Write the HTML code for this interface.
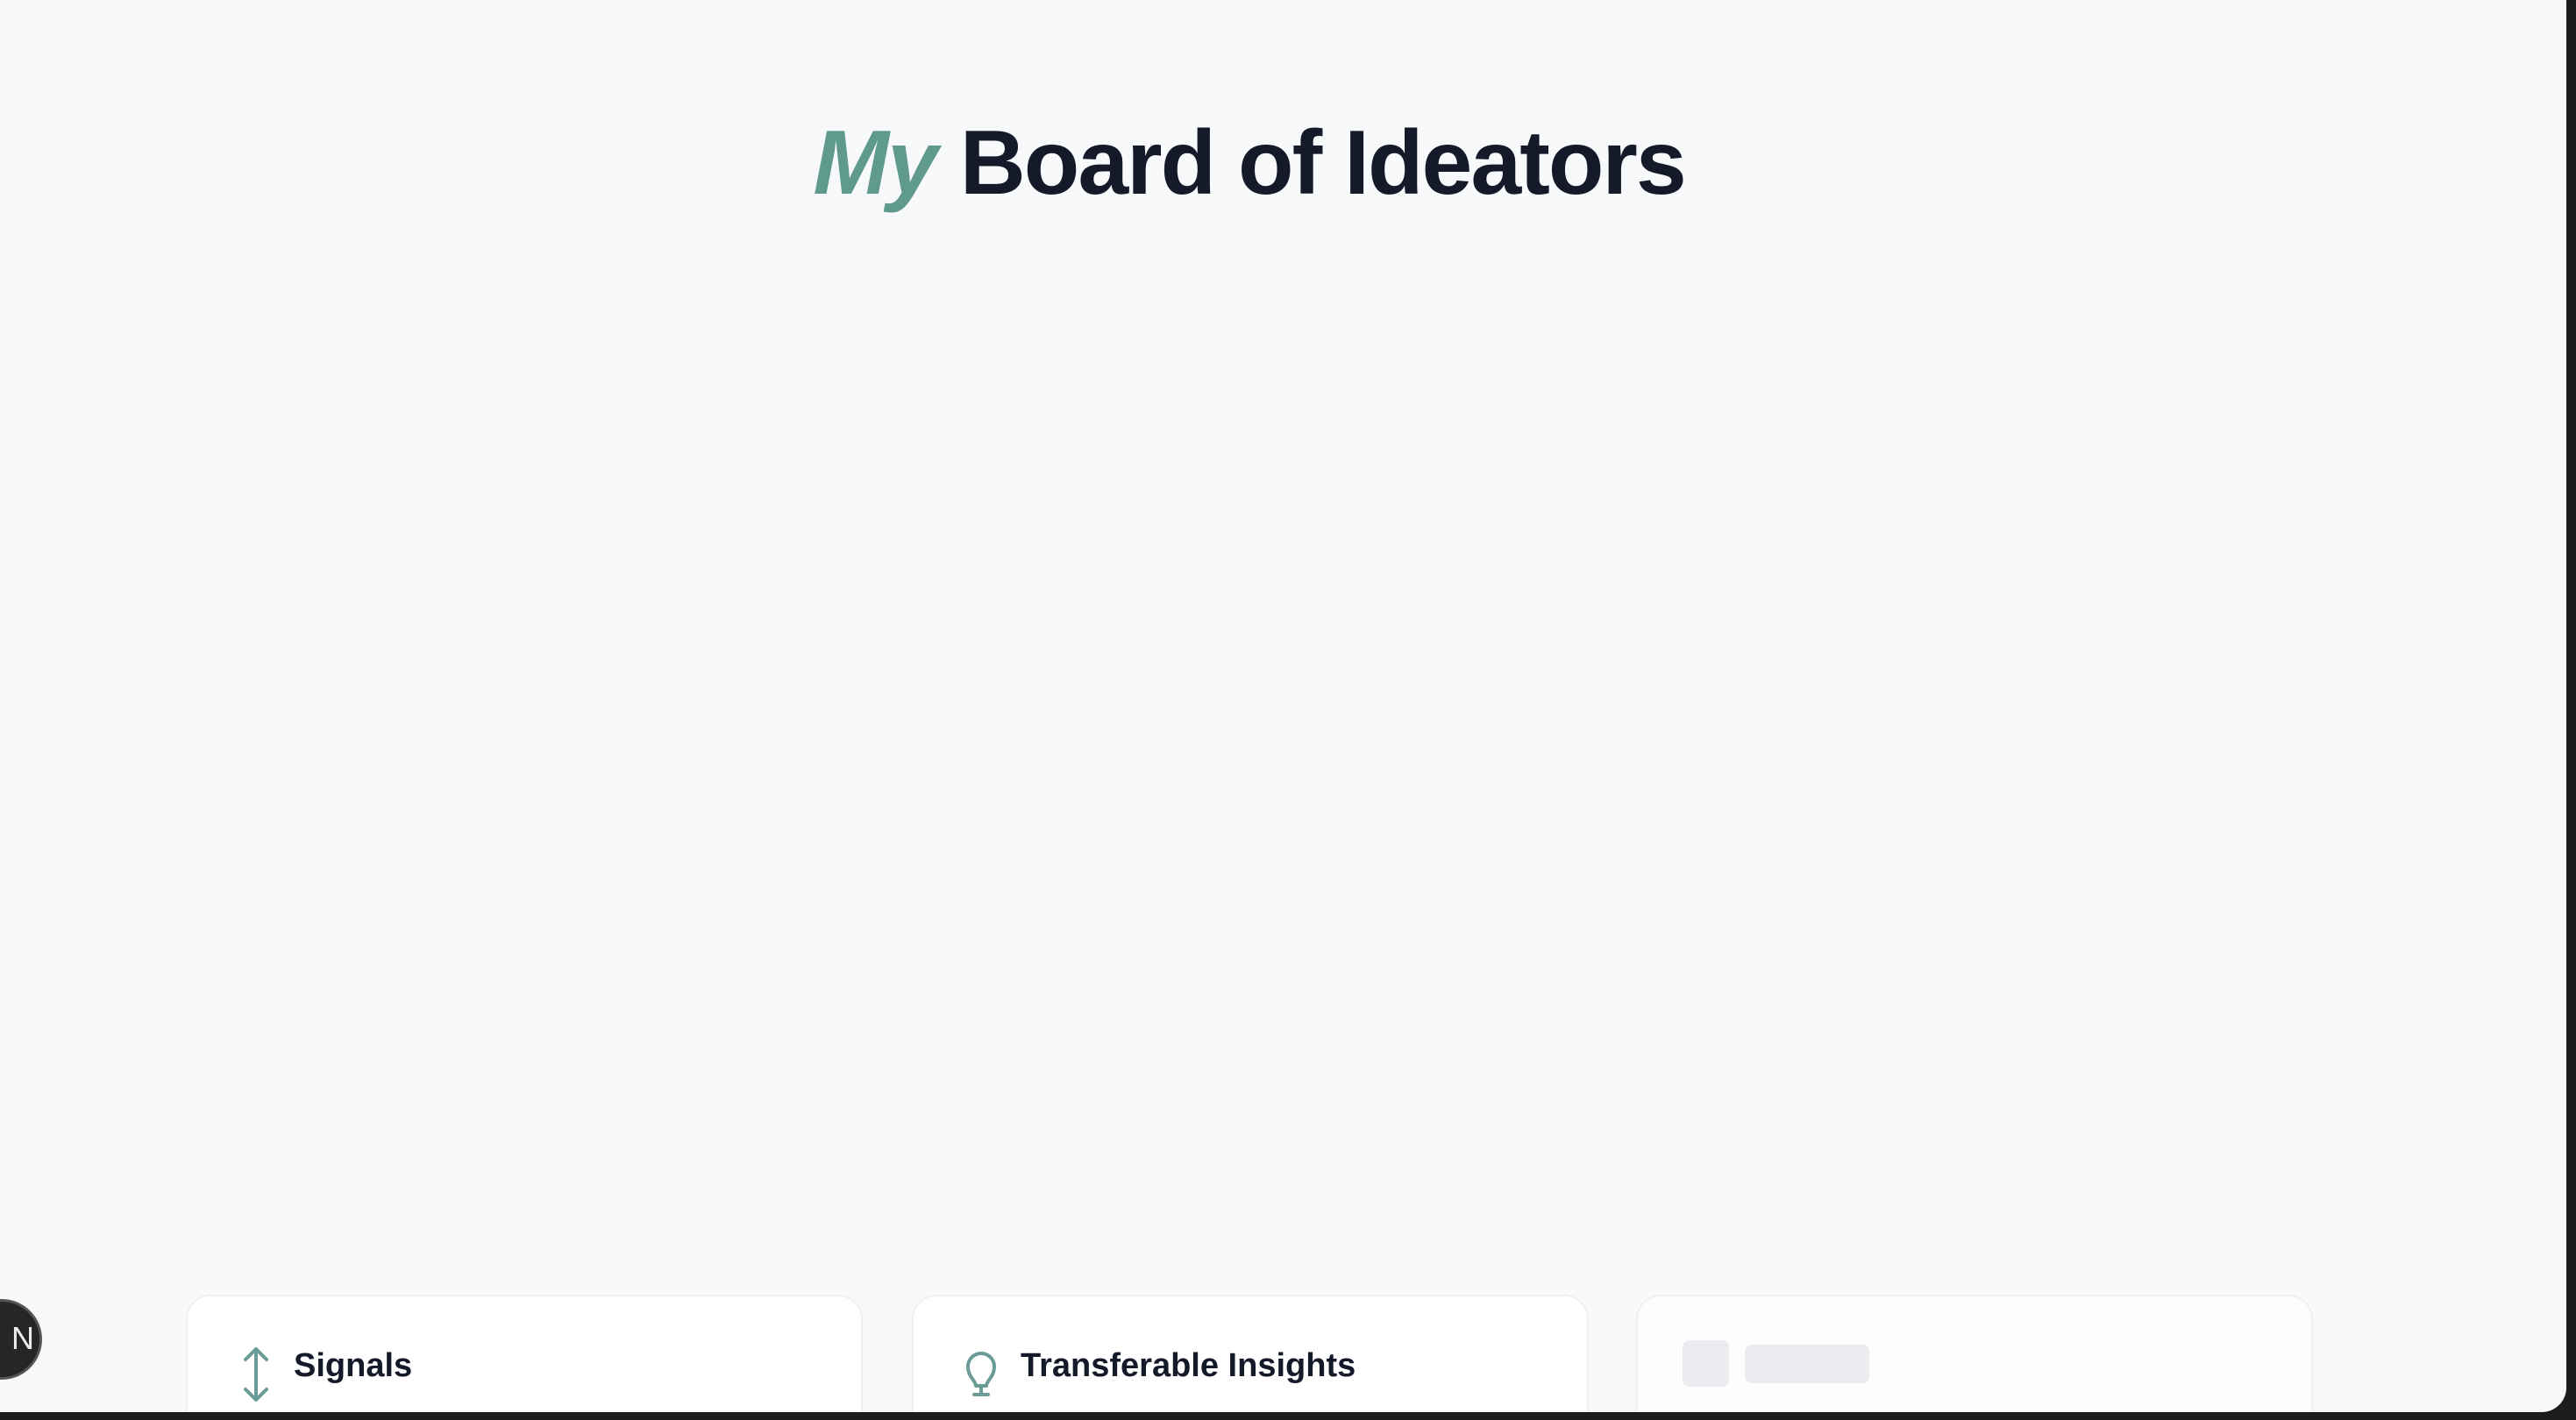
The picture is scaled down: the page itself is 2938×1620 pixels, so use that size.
<!DOCTYPE html>
<html><head><meta charset="utf-8"><style>
html,body{margin:0;padding:0;width:2938px;height:1620px;overflow:hidden;background:#1c1e1e;}
.page{position:absolute;left:0;top:0;width:2927px;height:1611px;background:#f8f9fb;border-bottom-right-radius:28px;overflow:hidden;font-family:"Liberation Sans",sans-serif;}
h1{position:absolute;left:0;width:2927px;top:116px;margin:0;text-align:center;font-size:104px;font-weight:700;color:#141a2a;letter-spacing:-2px;line-height:140px;padding-right:78px;box-sizing:border-box}
h1 em{color:#5f9a8c;font-style:italic;}
.card{position:absolute;top:1477px;width:772px;height:200px;background:#fff;border:2px solid #eef0f3;border-radius:28px;box-sizing:border-box}
.t{position:absolute;left:121px;top:58px;font-size:38px;font-weight:700;color:#141a2a;}
.sk{position:absolute;background:#ebecf0;border-radius:8px}
.badge{position:absolute;left:-44px;top:1482px;width:92px;height:92px;border-radius:50%;background:#262626;border:3px solid #555;box-sizing:border-box;color:#eee;font-size:36px;line-height:84px;text-align:right;padding-right:6px;font-weight:300}
</style></head><body><div class="page">
<h1><em>My</em> Board of Ideators</h1>
<div class="card" style="left:212px">
<svg style="position:absolute;left:58px;top:56px" width="40" height="66" viewBox="0 0 40 66" fill="none" stroke="#6a9c97" stroke-width="4" stroke-linecap="round" stroke-linejoin="round"><path d="M20 4V62M8 16L20 4L32 16M8 50L20 62L32 50"/></svg>
<div class="t">Signals</div></div>
<div class="card" style="left:1040px">
<svg style="position:absolute;left:56px;top:58px" width="42" height="64" viewBox="0 0 42 64" fill="none" stroke="#6a9c97" stroke-width="4" stroke-linecap="round" stroke-linejoin="round"><path d="M15 44C15 38 6 34 6 22A15 15 0 0 1 36 22C36 34 27 38 27 44ZM13 54H29M21 44V54"/></svg>
<div class="t" style="left:122px">Transferable Insights</div></div>
<div class="card" style="left:1866px;background:#fdfdfe">
<div class="sk" style="left:51px;top:50px;width:53px;height:53px"></div>
<div class="sk" style="left:122px;top:55px;width:142px;height:44px"></div></div>
<div class="badge">N</div>
</div></body></html>
